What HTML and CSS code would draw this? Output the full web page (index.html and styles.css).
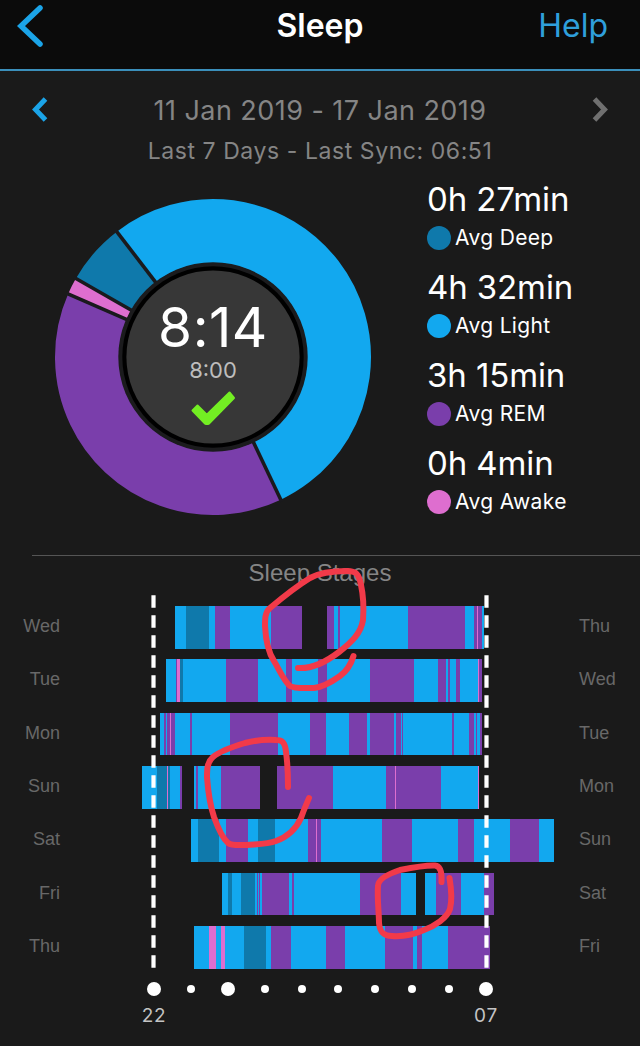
FILE: index.html
```html
<!DOCTYPE html>
<html lang="en">

<head>
    <meta charset="UTF-8">
    <meta name="viewport" content="width=device-width, initial-scale=1.0">
    <title>Sleep</title>
    <link rel="stylesheet" href="styles.css">
</head>

<body>

    <header class="top-bar">
        <svg class="back" width="32" height="50" viewBox="0 0 32 50">
            <path d="M25 7 L6 25 L25 43" />
        </svg>
        <h1>Sleep</h1>
        <a class="help">Help</a>
    </header>

    <section class="period">
        <div class="period-row">
            <svg class="arrow" width="20" height="30" viewBox="0 0 20 30">
                <path d="M15.5 4 L5.5 14.5 L15.5 25" />
            </svg>
            <span class="dates">11 Jan 2019 - 17 Jan 2019</span>
            <svg class="arrow next" width="20" height="30" viewBox="0 0 20 30">
                <path d="M4.5 4 L14.5 14.5 L4.5 25" />
            </svg>
        </div>
        <p class="sync">Last 7 Days - Last Sync: 06:51</p>
    </section>

    <section class="summary">
        <div class="donut">
            <svg width="320" height="320" viewBox="-160 -160 320 320">
                <g class="slices" transform="rotate(-90)">
                    <circle class="light" r="126" pathLength="360" stroke-dasharray="192.1 167.9" transform="rotate(-37.5)" />
                    <circle class="rem" r="126" pathLength="360" stroke-dasharray="138.9 221.1" transform="rotate(154.6)" />
                    <circle class="awake" r="126" pathLength="360" stroke-dasharray="6.3 353.7" transform="rotate(293.5)" />
                    <circle class="deep" r="126" pathLength="360" stroke-dasharray="22.7 337.3" transform="rotate(299.8)" />
                </g>
                <g class="cuts">
                    <path d="M0 -90 V-160" transform="rotate(-37.5)" />
                    <path d="M0 -90 V-160" transform="rotate(154.6)" />
                    <path d="M0 -90 V-160" transform="rotate(293.5)" />
                    <path d="M0 -90 V-160" transform="rotate(299.8)" />
                </g>
                <circle r="94.7" fill="#1b1b1d" />
                <circle r="90.7" fill="#000" />
                <circle r="86.6" fill="#373737" />
            </svg>
            <div class="total">
                <span class="slept">8:14</span>
                <span class="goal">8:00</span>
                <svg width="46" height="36" viewBox="0 0 46 36">
                    <path class="tick" d="M2.5 20.5 L7.5 15.5 L16.8 24.8 L39.5 2.5 L44 8 L19 33.5 Q17 34.5 15 33.5 Z" />
                </svg>
            </div>
        </div>
        <ul class="legend">
            <li><strong>0h 27min</strong><span><i class="deep"></i>Avg Deep</span></li>
            <li><strong>4h 32min</strong><span><i class="light"></i>Avg Light</span></li>
            <li><strong>3h 15min</strong><span><i class="rem"></i>Avg REM</span></li>
            <li><strong>0h 4min</strong><span><i class="awake"></i>Avg Awake</span></li>
        </ul>
    </section>

    <section class="stages">
        <h2>Sleep Stages</h2>
        <div id="chart"></div>
        <div class="axis">
            <div><b></b><span>22</span></div>
            <div><i></i></div>
            <div><b></b></div>
            <div><i></i></div>
            <div><i></i></div>
            <div><i></i></div>
            <div><i></i></div>
            <div><i></i></div>
            <div><i></i></div>
            <div><b></b><span>07</span></div>
        </div>
    </section>

    <!-- guides and hand-drawn marks over the chart -->
    <svg class="overlay" width="640" height="1046" viewBox="0 0 640 1046">
        <g class="guides">
            <path d="M153.5 595.2 V968" />
            <path d="M486.5 595.2 V968" />
        </g>
        <g class="marks">
            <path d="M298 668 C312 669 326 662 339 652 C352 642 361 633 363 620 C364 606 363 594 361 585 C359 574 356 571 347 571 C335 571 321 572 310 578 C297 586 283 597 270 608 C265 612 265 619 265 626 C266 645 270 655 274 661 C280 671 284 681 290 686 C295 689 307 688 314 688 C324 687 333 681 340 676 C347 671 351 664 353.5 656" />
            <path d="M288 787 C288 776 288 766 286 752 C285 742 282 740 276 740 C262 739 253 741 245 743 C235 746 220 751 213 757 C207 762 207 770 207 777 C208 791 211 808 214 817 C218 828 222 838 228 843 C232 846 240 845 247 845 C259 844 268 844 276 841 C287 837 296 829 301 818 C304 809 307 803 309 798" />
            <path d="M441.5 882 C442 873 441 866 435 865.5 C425 865 410 868 400 870 C391 873 378 878 378 886 C377 898 379 912 379 923 C380 933 384 936 392 936 C405 937 417 933 424 930 C435 926 447 918 450 909 C452 901 451 887 449.5 878" />
        </g>
    </svg>

    <script src="chart.js"></script>

</body>

</html>
```
FILE: styles.css
```css
body {
    margin: 0;
    width: 640px;
    height: 1046px;
    position: relative;
    overflow: hidden;
    background-color: #1a1a1a;
    color: #fff;
    font-family: Inter, 'Liberation Sans', sans-serif;
}

h1,
h2,
p,
ul {
    margin: 0;
    padding: 0;
}

.top-bar {
    display: grid;
    grid-template-columns: 120px 1fr 120px;
    align-items: center;
    height: 69px;
    padding-bottom: 18px;
    box-sizing: border-box;
    background-color: #0b0b0b;
}

.back {
    margin-left: 15px;
    fill: none;
    stroke: #1ba4e8;
    stroke-width: 5.5;
    stroke-linecap: round;
}

h1 {
    font-size: 32px;
    font-weight: 600;
    line-height: 50px;
    text-align: center;
}

.help {
    color: #2f9fdb;
    font-size: 32px;
    line-height: 50px;
    text-align: right;
    margin-right: 32px;
}

.period {
    border-top: 2px solid #3b8fbb;
    height: 101px;
    padding-top: 19px;
    box-sizing: border-box;
    color: #858585;
    text-align: center;
}

.period-row {
    display: flex;
    justify-content: space-between;
    align-items: center;
    height: 40px;
    padding: 0 30px;
}

.arrow {
    fill: none;
    stroke: #1ba4e8;
    stroke-width: 5;
}

.next {
    stroke: #707070;
}

.dates {
    font-size: 27px;
    letter-spacing: 0.45px;
}

.sync {
    font-size: 23px;
    line-height: 42px;
    letter-spacing: 0.57px;
}

.summary {
    display: flex;
    height: 385px;
}

.donut {
    display: grid;
    margin: 27px 0 0 53px;
    width: 320px;
    height: 320px;
}

.donut > * {
    grid-area: 1 / 1;
}

.slices circle {
    fill: none;
    stroke-width: 64;
}

.slices .deep {
    stroke: #0f79ab;
}

.slices .light {
    stroke: #12a8ef;
}

.slices .rem {
    stroke: #7a3eab;
}

.slices .awake {
    stroke: #de6ecf;
}

.cuts path {
    stroke: #1a1a1d;
    stroke-width: 3.6;
}

.total {
    display: flex;
    flex-direction: column;
    align-items: center;
    padding-top: 100px;
}

.slept {
    font-size: 55px;
    font-weight: 400;
    line-height: 60px;
    letter-spacing: 0.5px;
}

.goal {
    color: #bdbdbd;
    font-size: 22px;
    font-weight: 400;
    line-height: 26px;
    margin-bottom: 7px;
}

.tick {
    fill: #73ee23;
    stroke: #73ee23;
    stroke-width: 2;
    stroke-linejoin: round;
}

.legend {
    list-style: none;
    margin: 9px 0 0 54px;
}

.legend li {
    height: 88px;
}

.legend strong {
    display: block;
    font-size: 33px;
    font-weight: 400;
    line-height: 40px;
    letter-spacing: -0.1px;
}

.legend span {
    display: flex;
    align-items: center;
    font-size: 21px;
    line-height: 38px;
    letter-spacing: 0.35px;
}

.legend i {
    width: 24px;
    height: 24px;
    margin-right: 4px;
    border-radius: 50%;
}

i.deep,
.seg.deep {
    background-color: #0f79ab;
}

i.light,
.seg.light {
    background-color: #12a8ef;
}

i.rem,
.seg.rem {
    background-color: #7a3eab;
}

i.awake,
.seg.awake {
    background-color: #de6ecf;
}

.stages::before {
    content: '';
    display: block;
    height: 1px;
    margin-left: 32px;
    background-color: #555;
}

h2 {
    color: #858585;
    font-family: 'Liberation Sans', Arial, sans-serif;
    font-size: 24px;
    font-weight: 400;
    line-height: 34px;
    height: 50px;
    text-align: center;
}

.night {
    display: grid;
    grid-template-columns: 60px 505px 60px;
    height: 53.35px;
    color: #686868;
    font-family: 'Liberation Sans', Arial, sans-serif;
    font-size: 18px;
    line-height: 41px;
}

.night .from {
    text-align: right;
}

.night .to {
    padding-left: 14px;
}

.bar {
    display: flex;
    height: 42.7px;
    padding-left: 75px;
}

.axis {
    display: grid;
    grid-template-columns: repeat(10, 36.9px);
    margin: 3px 0 0 135.5px;
}

.axis div {
    display: flex;
    flex-direction: column;
    align-items: center;
    color: #c4c4c4;
    font-size: 19px;
    letter-spacing: 0.7px;
    line-height: 39px;
}

.axis b,
.axis i {
    width: 14px;
    height: 14px;
    border-radius: 50%;
    background-color: #fff;
}

.axis i {
    width: 8px;
    height: 8px;
    margin-top: 3px;
}

.overlay {
    position: absolute;
    top: 0;
    left: 0;
    pointer-events: none;
}

.guides path {
    stroke: #fff;
    stroke-width: 4.2;
    stroke-dasharray: 12.6 7.4;
}

.marks path {
    fill: none;
    stroke: #f23a49;
    stroke-width: 6;
    stroke-linecap: round;
    stroke-linejoin: round;
}
```
FILE: chart.js
```js
// Each entry is the start of a stage, the last one is the wake-up time
// L = light, D = deep, R = REM, A = awake, X = no data
const nights = [
    { from: 'Wed', to: 'Thu', stages: '175L 186D 209L 215R 230L 271R 302X 327R 334L 338R 340L 408R 465L 474R 477A 478R 482L 484' },
    { from: 'Tue', to: 'Wed', stages: '166L 176R 177A 180D 183L 226R 258L 286R 292L 318R 327L 370R 414L 438R 446L 448R 450L 456R 460L 478A 479R 482' },
    { from: 'Mon', to: 'Tue', stages: '160L 164R 166L 167R 170A 171R 175L 190R 192L 230R 278L 310R 326L 349R 367L 370R 394L 396R 401L 402R 403L 452R 454L 469R 474L 476R 477L 480R 482' },
    { from: 'Sun', to: 'Mon', stages: '142L 157D 167A 168D 170L 180R 182X 194L 196R 198L 221R 260X 277R 333L 386R 395A 396R 441L 478A 479' },
    { from: 'Sat', to: 'Sun', stages: '191L 198D 219L 226R 248L 258D 275L 308R 316A 317R 321L 382R 412L 458R 474L 510R 539L 554' },
    { from: 'Fri', to: 'Sat', stages: '222L 228D 232L 241D 255L 257R 258L 259R 260L 262R 289L 292R 294L 360R 401L 416X 425L 436R 461L 484R 494' },
    { from: 'Thu', to: 'Fri', stages: '194L 209A 216L 221A 225L 244D 266L 271R 291L 326R 345L 385R 413L 417R 422L 448R 490' }
];

const names = { L: 'light', D: 'deep', R: 'rem', A: 'awake', X: 'none' };
const plotStart = 135;

function drawNight(night) {
    const points = night.stages.split(' ');
    let html = `<div class="seg" style="width:${parseInt(points[0]) - plotStart}px"></div>`;
    for (let i = 0; i < points.length - 1; i++) {
        const width = parseInt(points[i + 1]) - parseInt(points[i]);
        html += `<div class="seg ${names[points[i].slice(-1)]}" style="width:${width}px"></div>`;
    }
    return `<div class="night"><span class="from">${night.from}</span><div class="bar">${html}</div><span class="to">${night.to}</span></div>`;
}

document.getElementById('chart').innerHTML = nights.map(drawNight).join('');
```
